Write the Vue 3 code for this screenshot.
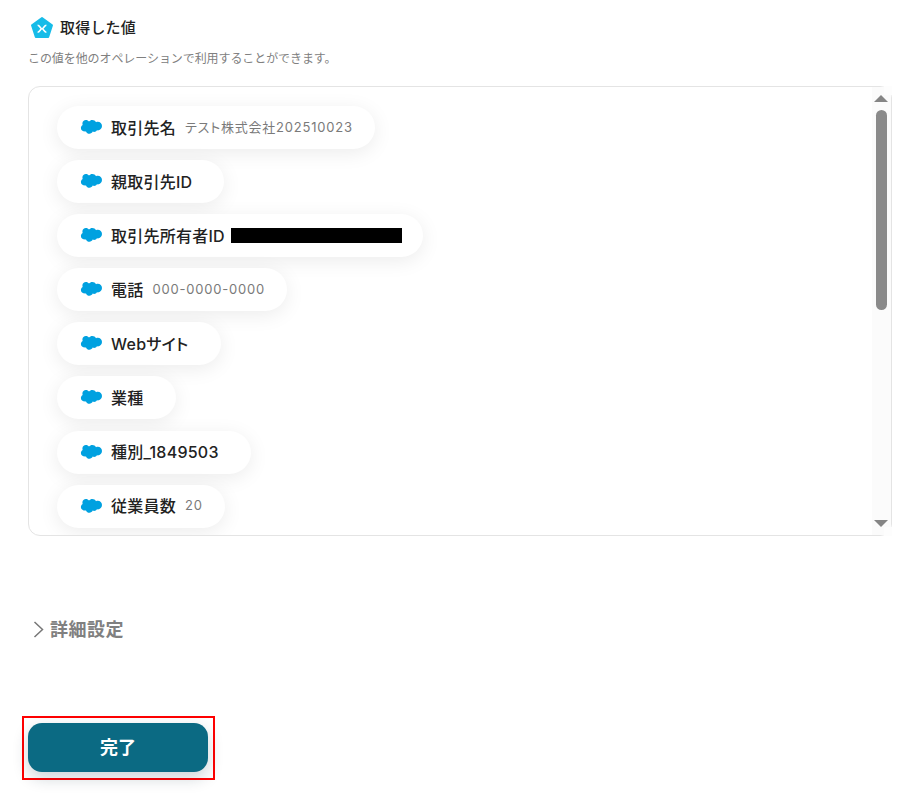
<script setup>
const fields = [
  { name: '取引先名', value: 'テスト株式会社202510023' },
  { name: '親取引先ID' },
  { name: '取引先所有者ID', masked: true },
  { name: '電話', value: '000-0000-0000' },
  { name: 'Webサイト' },
  { name: '業種' },
  { name: '種別_1849503' },
  { name: '従業員数', value: '20' }
]
</script>

<template>
  <div class="page">
    <div class="heading">
      <svg class="heading-icon" width="24" height="24" viewBox="0 0 24 24">
        <path d="M12 2 22 9.300 18.200 21H5.800L2 9.300Z" fill="#17bce8" stroke="#17bce8" stroke-width="2" stroke-linejoin="round" />
        <path d="M7.600 9.300C9.800 9.300 10.400 12.800 12 12.800 13.600 12.800 14.200 9.300 16.400 9.300M7.600 16.200C9.800 16.200 10.400 12.800 12 12.800 13.600 12.800 14.200 16.200 16.400 16.200" fill="none" stroke="#fff" stroke-width="1.600" />
      </svg>
      <span class="heading-text">取得した値</span>
    </div>
    <p class="desc">この値を他のオペレーションで利用することができます。</p>

    <div class="box">
      <div class="list">
        <div v-for="item in fields" :key="item.name" :class="['pill', { plain: !item.value && !item.masked }]">
          <svg class="cloud" width="22" height="16" viewBox="0 0 22 16">
            <path d="M9 2.600C9.900 1.500 11 1 12.300 1c1.600 0 3 .9 3.700 2.200.6-.3 1.200-.4 1.800-.4C20.100 2.800 22 4.700 22 7.100s-1.900 4.300-4.200 4.300c-.3 0-.6 0-.9-.1-.5 1-1.600 1.600-2.800 1.600-.5 0-1-.1-1.400-.3-.6 1.300-1.800 2.200-3.300 2.200-1.500 0-2.800-.9-3.400-2.300-.3.100-.5.100-.8.100C2.500 12.600.9 11 .9 9c0-1.300.7-2.500 1.800-3.100-.2-.5-.3-1-.3-1.500C2.400 2.500 4 1 5.900 1 7.200 1 8.300 1.600 9 2.600Z" fill="#00a1e0" />
          </svg>
          <span class="name">{{ item.name }}</span>
          <span v-if="item.value" class="value">{{ item.value }}</span>
          <span v-if="item.masked" class="mask"></span>
        </div>
      </div>
      <div class="scrollbar">
        <span class="arrow up"></span>
        <div class="track"><div class="thumb"></div></div>
        <span class="arrow down"></span>
      </div>
      <span class="corner top"></span>
      <span class="corner bottom"></span>
    </div>

    <div class="detail">
      <svg width="11" height="18" viewBox="0 0 11 18">
        <path d="M1.500 2 9.500 9.500 1.500 17" fill="none" stroke="#777" stroke-width="1.500" />
      </svg>
      <span class="detail-text">詳細設定</span>
    </div>

    <div class="action">
      <button class="done" type="button">完了</button>
    </div>
  </div>
</template>

<style>
body {
  background: #fff;
}
</style>

<style scoped>
.page {
  box-sizing: border-box;
  width: 918px;
  height: 799px;
  padding: 16px 26px 0 28px;
  overflow: hidden;
  font-family: Inter, "Noto Sans CJK JP", sans-serif;
  color: #222;
}
.heading {
  display: flex;
  align-items: center;
  gap: 6px;
  height: 24px;
  padding-left: 2px;
  font-size: 15px;
  font-weight: 500;
  letter-spacing: 0.2px;
  color: #222;
}
.heading-text {
  padding-bottom: 3px;
}
.desc {
  margin: 10px 0 0;
  font-size: 12px;
  line-height: 18px;
  letter-spacing: -0.08px;
  color: #808080;
}
.box {
  position: relative;
  display: flex;
  box-sizing: border-box;
  height: 450px;
  margin-top: 18px;
  border: 1px solid #e4e4e4;
  border-radius: 12px;
}
.list {
  flex: 1;
  display: flex;
  flex-direction: column;
  align-items: flex-start;
  gap: 11.100px;
  padding: 19px 0 0 28px;
  overflow: hidden;
  border-radius: 12px 0 0 12px;
}
.pill {
  display: flex;
  align-items: center;
  flex: none;
  box-sizing: border-box;
  height: 43px;
  padding: 0 22px 2px 23px;
  border-radius: 22px;
  background: #fff;
  box-shadow: 0 4px 20px rgba(0, 0, 0, 0.08);
}
.pill.plain {
  padding-right: 32px;
}
.cloud {
  flex: none;
  margin: 1px 9px 0 0;
}
.name {
  font-size: 16px;
  font-weight: 500;
  letter-spacing: 0.25px;
  font-feature-settings: "palt";
  color: #222;
}
.value {
  margin-left: 9px;
  font-size: 13px;
  letter-spacing: 0.8px;
  font-feature-settings: "palt";
  color: #7a7a7a;
}
.mask {
  width: 171px;
  height: 15px;
  margin: 2px -1px 0 6px;
  background: #000;
}
.scrollbar {
  flex: none;
  display: flex;
  flex-direction: column;
  align-items: center;
  box-sizing: border-box;
  width: 19px;
  padding: 8px 1px 8px 0;
  background: #fbfbfb;
}
.track {
  flex: 1;
  width: 100%;
  padding-top: 8px;
}
.thumb {
  width: 11px;
  height: 200px;
  margin: 0 auto;
  border-radius: 6px;
  background: #8a8a8a;
}
.arrow {
  width: 0;
  height: 0;
  border-left: 7px solid transparent;
  border-right: 7px solid transparent;
}
.arrow.up {
  border-bottom: 7px solid #858585;
}
.arrow.down {
  border-top: 7px solid #858585;
}
.corner {
  position: absolute;
  right: -1px;
  width: 8px;
  height: 9px;
  background: #fdfdfd;
}
.corner.top {
  top: -1px;
}
.corner.bottom {
  bottom: -1px;
}
.detail {
  display: flex;
  align-items: center;
  gap: 6px;
  height: 26px;
  margin-top: 80px;
  padding-left: 5px;
  font-size: 18px;
  font-weight: 600;
  letter-spacing: 0.5px;
  color: #808080;
}
.detail-text {
  padding-bottom: 2px;
}
.action {
  width: 193px;
  height: 64px;
  margin: 74px 0 0 -6px;
  padding: 5px 5px 0 4px;
  box-sizing: border-box;
  border: 2px solid #f00;
}
.done {
  display: block;
  width: 180px;
  height: 49px;
  padding: 0 0 4px;
  border: none;
  border-radius: 14px;
  background: #0b6a83;
  box-shadow: 0 6px 16px rgba(0, 40, 60, 0.2);
  font-family: inherit;
  font-size: 18px;
  font-weight: 700;
  color: #fff;
}
</style>
